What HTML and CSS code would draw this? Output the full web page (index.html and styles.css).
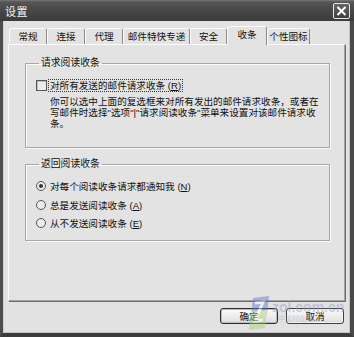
FILE: index.html
```html
<!DOCTYPE html>
<html lang="zh-CN">
  <head>
    <meta charset="UTF-8" />
    <title>设置</title>
    <link rel="stylesheet" href="styles.css">
  </head>
  <body>
    <div class="window">
      <div class="titlebar">
        <span class="title">设置</span>
        <span class="close-btn">
          <svg width="11" height="10" viewBox="0 0 11 10">
            <path d="M1.5 1 L9.5 9 M9.5 1 L1.5 9" stroke="#fff" stroke-width="2" />
          </svg>
        </span>
      </div>

      <div class="client">
        <ul class="tabs">
          <li class="tab w-38">常规</li>
          <li class="tab w-38">连接</li>
          <li class="tab w-38">代理</li>
          <li class="tab w-67">邮件特快专递</li>
          <li class="tab w-37">安全</li>
          <li class="tab w-40 active">收条</li>
          <li class="tab w-43">个性图标</li>
        </ul>

        <div class="panel">
          <fieldset class="group group-request">
            <legend>请求阅读收条</legend>
            <div class="check-row">
              <span class="checkbox"></span>
              <span class="focus-label">对所有发送的邮件请求收条 (<u>R</u>)</span>
            </div>
            <p class="note">
              <span class="note-line">你可以选中上面的复选框来对所有发出的邮件请求收条，或者在</span>
              <span class="note-line">写邮件时选择"选项"|"请求阅读收条"菜单来设置对该邮件请求收</span>
              <span class="note-line">条。</span>
            </p>
          </fieldset>

          <fieldset class="group group-return">
            <legend>返回阅读收条</legend>
            <div class="radio-row">
              <span class="radio checked"></span>
              <span>对每个阅读收条请求都通知我 (<u>N</u>)</span>
            </div>
            <div class="radio-row">
              <span class="radio"></span>
              <span>总是发送阅读收条 (<u>A</u>)</span>
            </div>
            <div class="radio-row">
              <span class="radio"></span>
              <span>从不发送阅读收条 (<u>E</u>)</span>
            </div>
          </fieldset>
        </div>

        <div class="buttons">
          <button class="btn btn-default">确定</button>
          <button class="btn">取消</button>
        </div>
      </div>

      <!-- site watermark over the bottom right corner -->
      <div class="watermark">
        <svg class="wm-logo" width="22" height="34" viewBox="0 0 22 34">
          <polygon points="5,2 21,0 19,18 3,20" fill="#5b78c8" />
          <polygon points="3,16 19,14 17,32 1,34" fill="#a5d070" />
          <path d="M7 7 L15 6 L7 25 L15 24" stroke="#fff" stroke-width="3" fill="none" />
        </svg>
        <div class="wm-text">
          <span class="wm-site">zol.com.cn</span>
          <span class="wm-sub">中关村在线</span>
        </div>
      </div>
    </div>
  </body>
</html>
```

FILE: styles.css
```css
/* ------ */
/* General Styling */
* {
  margin: 0;
  padding: 0;
  box-sizing: border-box;
}

body {
  width: 354px;
  height: 337px;
  overflow: hidden;
  background-color: #3a3a3a;
  font-family: "Liberation Sans", "Noto Sans CJK SC", sans-serif;
  font-size: 9.6px;
  color: #111;
}

u {
  text-decoration: underline;
}

.window {
  position: relative;
  width: 354px;
  height: 337px;
  display: flex;
  flex-direction: column;
}

/* ------ */
/* Title bar */
.titlebar {
  height: 21px;
  display: flex;
  align-items: center;
  justify-content: space-between;
  padding: 0 4px 0 5px;
  background: linear-gradient(#7a7a7a 0, #555 2px, #474747 50%, #3b3b3b 100%);
}

.title {
  color: #f4f4f4;
  font-size: 11px;
  letter-spacing: 0.5px;
}

.close-btn {
  width: 17px;
  height: 16px;
  display: flex;
  align-items: center;
  justify-content: center;
  border: 1px solid #e6e6e6;
  border-radius: 2px;
  background: linear-gradient(#666, #3e3e3e);
}

/* ------ */
/* Client area */
.client {
  flex: 1;
  display: flex;
  flex-direction: column;
  background-color: #e2e2e2;
  border-left: 3px solid #4e4e4e;
  border-right: 4px solid #4a4a4a;
  border-bottom: 4px solid #3c3c3c;
  box-shadow: inset 1px 0 #cfcfcf, inset -1px 0 #c4c4c4, inset 0 -1px #c4c4c4;
  padding: 5px 5px 0 5px;
}

.tabs {
  list-style: none;
  display: flex;
  align-items: flex-end;
  margin-left: 1px;
  height: 18px;
}

.tab {
  height: 16px;
  line-height: 15px;
  text-align: center;
  background-color: #e3e3e3;
  border-top: 1px solid #fbfbfb;
  border-left: 1px solid #fbfbfb;
  border-right: 1px solid #8a8a8a;
  border-radius: 3px 3px 0 0;
  white-space: nowrap;
}

.tab.active {
  height: 19px;
  line-height: 16px;
  margin-bottom: -1px;
  position: relative;
}

.w-37 { width: 37px; }
.w-38 { width: 38px; }
.w-40 { width: 40px; }
.w-43 { width: 43px; }
.w-67 { width: 67px; }

.panel {
  width: 337px;
  height: 257px;
  display: flex;
  flex-direction: column;
  gap: 10px;
  padding: 12px 14px 0 16px;
  background-color: #e3e3e3;
  border-top: 1px solid #fbfbfb;
  border-left: 1px solid #fbfbfb;
  border-right: 1px solid #a3a3a3;
  border-bottom: 1px solid #a3a3a3;
  box-shadow: 1px 1px 0 #6c6c6c;
}

/* ------ */
/* Group boxes */
.group {
  border: 1px solid #a6a6a6;
  box-shadow: inset 1px 1px 0 #fafafa, 1px 1px 0 #fafafa;
  min-width: 0;
  padding: 0 10px;
}

.group legend {
  margin-left: 3px;
  padding: 0 2px;
  line-height: 12px;
  font-size: 9.8px;
}

.group-request {
  height: 91px;
  padding-top: 11px;
}

.group-return {
  height: 83px;
  padding-top: 7px;
}

.check-row {
  display: flex;
  align-items: center;
  gap: 2px;
  height: 11px;
}

.checkbox {
  width: 11px;
  height: 11px;
  border: 1px solid #555;
  background-color: #ececec;
  box-shadow: inset 1px 1px 0 #bdbdbd;
}

.focus-label {
  line-height: 11px;
  padding: 0 1px;
  outline: 1px dotted #333;
}

.note {
  display: flex;
  flex-direction: column;
  margin: 5px 0 0 14px;
  white-space: nowrap;
}

.note-line {
  line-height: 11px;
}

.radio-row {
  display: flex;
  align-items: center;
  gap: 4px;
  height: 18.5px;
}

.radio {
  width: 10px;
  height: 10px;
  border: 1px solid #555;
  border-radius: 50%;
  background-color: #ececec;
  display: flex;
  align-items: center;
  justify-content: center;
}

.radio.checked::after {
  content: "";
  width: 4px;
  height: 4px;
  border-radius: 50%;
  background-color: #333;
}

/* ------ */
/* Buttons */
.buttons {
  display: flex;
  justify-content: flex-end;
  gap: 8px;
  margin-top: 7px;
  padding-right: 1px;
}

.btn {
  width: 58px;
  height: 16px;
  font-family: inherit;
  font-size: 9.6px;
  color: #111;
  border: 1px solid #3e3e3e;
  border-radius: 3px;
  background: linear-gradient(#fafafa, #e6e6e6 80%, #cfcfcf);
  box-shadow: inset 0 0 0 1px #f4f4f4;
}

.btn-default {
  border-color: #2e2e2e;
  box-shadow: inset 0 0 0 1px #bdbdbd;
}

/* ------ */
/* Watermark */
.watermark {
  position: absolute;
  left: 248px;
  top: 296px;
  display: flex;
  align-items: flex-start;
  gap: 2px;
  opacity: 0.45;
  pointer-events: none;
}

.wm-text {
  display: flex;
  flex-direction: column;
  margin-top: 5px;
}

.wm-site {
  font-size: 14px;
  font-weight: bold;
  line-height: 13px;
  color: #8ea0c8;
}

.wm-sub {
  font-size: 7px;
  line-height: 9px;
  color: #9aaad0;
  margin-left: 6px;
}
```
